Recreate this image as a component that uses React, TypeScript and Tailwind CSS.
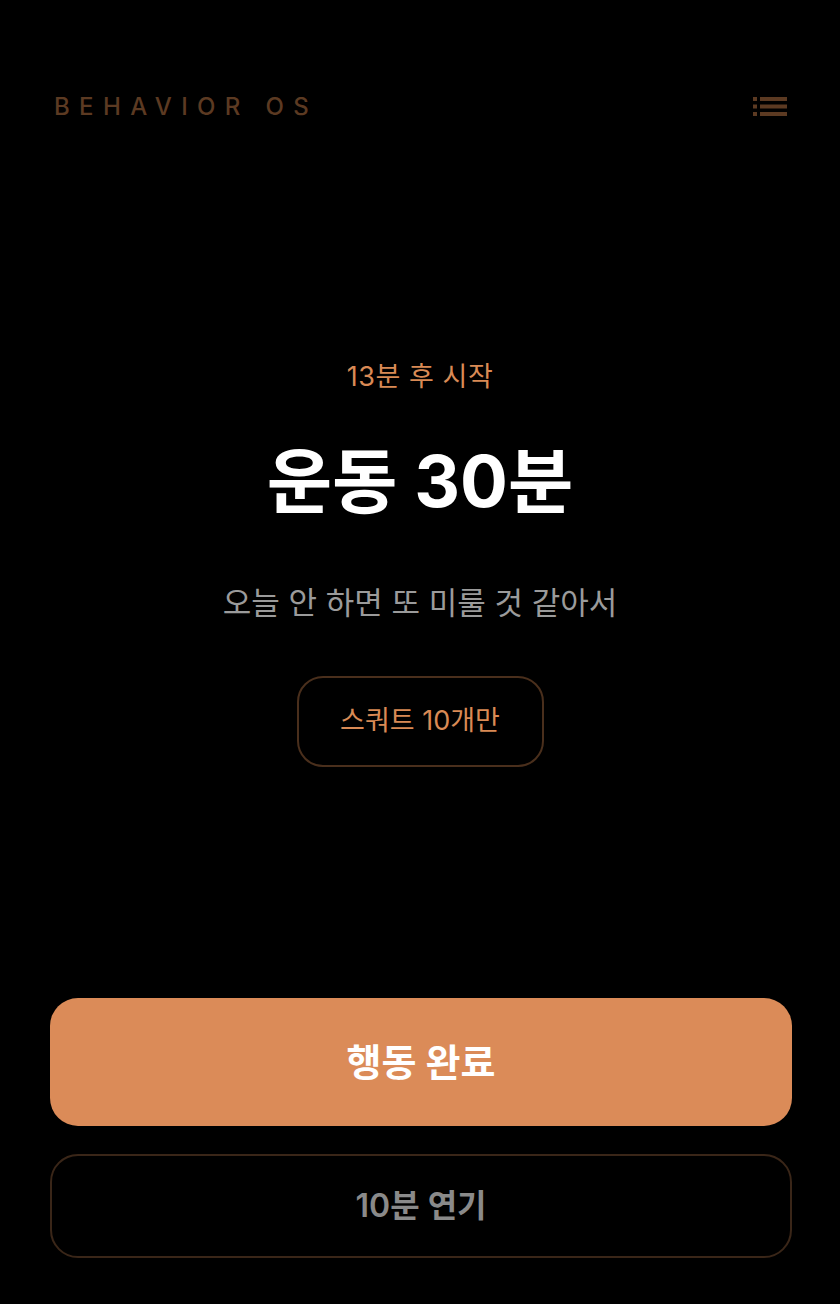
import React from "react";

const font = { fontFamily: 'Inter, "Noto Sans CJK KR", sans-serif' };

const MenuIcon = () => (
  <svg width="34" height="20" viewBox="0 0 34 20" fill="#5c3a22">
    <rect x="0" y="0" width="4" height="4" />
    <rect x="7" y="0" width="27" height="4" />
    <rect x="0" y="7.5" width="4" height="4" />
    <rect x="7" y="7.5" width="27" height="4" />
    <rect x="0" y="15" width="4" height="4" />
    <rect x="7" y="15" width="27" height="4" />
  </svg>
);

export default function App() {
  return (
    <div
      className="w-[840px] h-[1304px] bg-black flex flex-col"
      style={font}
    >
      {/* HEADER */}
      <header className="flex items-center justify-between pl-[54px] pr-[53px] pt-[95px]">
        <span className="text-[24px] font-medium tracking-[0.39em] text-[#5c3a22] leading-none">
          BEHAVIOR OS
        </span>
        <button className="p-0">
          <MenuIcon />
        </button>
      </header>

      {/* MAIN */}
      <main className="flex flex-col items-center mt-[244px]">
        <p className="text-[27px] text-[#d98a55] leading-none tracking-[0.02em]">
          13분 후 시작
        </p>
        <h1 className="mt-[56px] text-[71px] font-bold text-white leading-none">
          운동 30분
        </h1>
        <p className="mt-[70px] text-[31px] text-[#9b9b9b] leading-none">
          오늘 안 하면 또 미룰 것 같아서
        </p>
        <div className="mt-[58px] w-[247px] h-[91px] rounded-[26px] border-2 border-[#4a2f1c] flex items-center justify-center">
          <span className="text-[27px] text-[#d98a55]">스쿼트 10개만</span>
        </div>
      </main>

      {/* ACTIONS */}
      <div className="mt-auto flex flex-col gap-[28px] pl-[50px] pr-[48px] pb-[46px]">
        <button className="h-[128px] w-full rounded-[28px] bg-[#db8b58] text-[38px] font-bold text-white">
          행동 완료
        </button>
        <button className="h-[104px] w-full rounded-[28px] border-2 border-[#3a2618] text-[32px] font-semibold text-[#8a8a8a]">
          10분 연기
        </button>
      </div>
    </div>
  );
}
